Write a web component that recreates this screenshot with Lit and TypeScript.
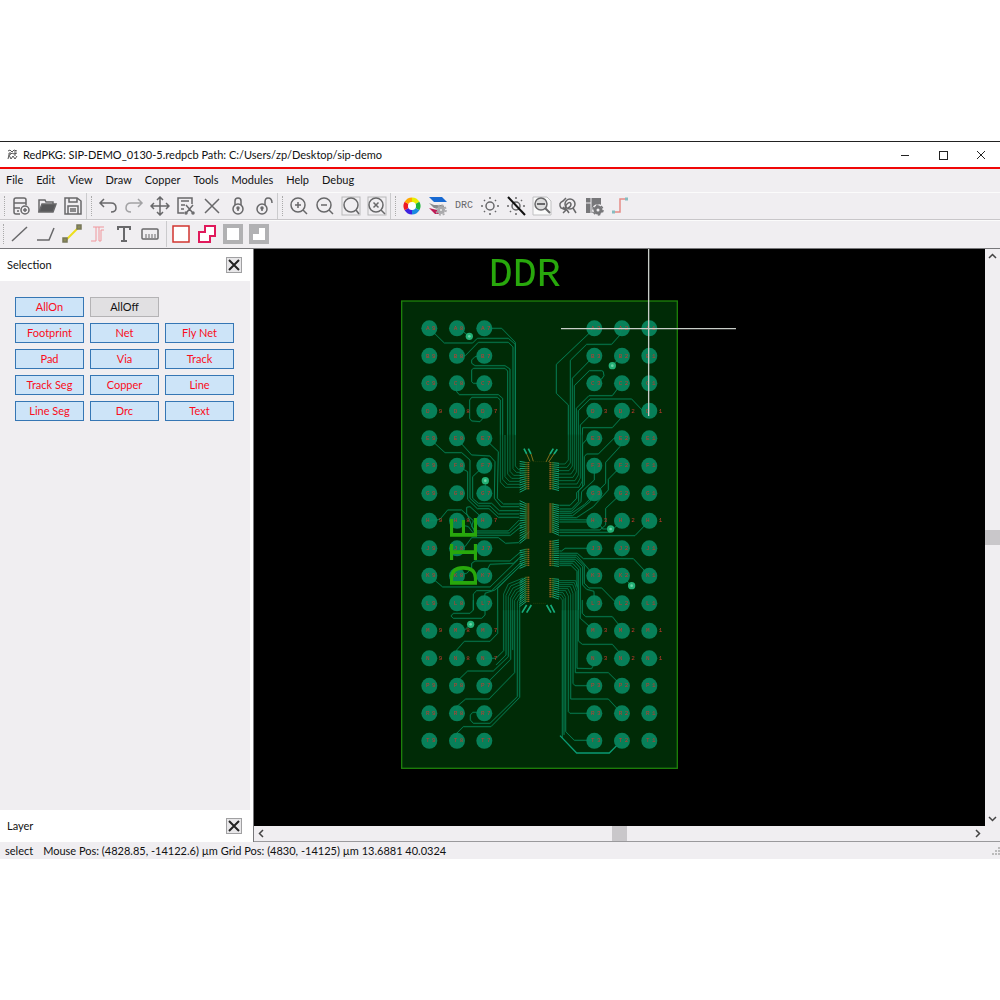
import { LitElement, html, css, svg } from "lit";
import { customElement, state } from "lit/decorators.js";

const g = "#68686a";

const icons: Record<string, unknown> = {
  new: svg`<path d="M15 9V4Q15 2 13 2H5Q3 2 3 4V16Q3 18 5 18H9M3 7H15M3 12H9M6 15H8" /><circle cx="14" cy="14" r="4" /><path d="M12 14H16M14 12V16" />`,
  open: svg`<path d="M2 16V4H8L9 6H16V8" fill="none" /><path d="M2 16L5 8H19L16 16Z" fill="#58585a" />`,
  save: svg`<path d="M3 2H14L18 5V18H2V2Z" /><path d="M6 2V6H14V2M5 18V10H15V18M7 13H13M7 15H13" />`,
  undo: svg`<path d="M6 3L2 7L6 11M2 7H13Q18 7 18 12Q18 16 13 16" />`,
  redo: svg`<path d="M14 3L18 7L14 11M18 7H7Q2 7 2 12Q2 16 7 16" stroke="#a2a2a4" />`,
  move: svg`<path d="M10 2V18M2 10H18M7 4L10 1L13 4M7 16L10 19L13 16M4 7L1 10L4 13M16 7L19 10L16 13" />`,
  cut: svg`<path d="M16 8V2H2V17H8M5 5H13M5 9H9M5 13H8M10 9L16 16M17 9L11 16" /><circle cx="10" cy="17" r="1" /><circle cx="17" cy="17" r="1" />`,
  del: svg`<path d="M3 3L17 17M17 3L3 17" />`,
  lock: svg`<circle cx="10" cy="13" r="5" /><path d="M7 9V5Q7 2 10 2Q13 2 13 5V9M10 12V15" /><circle cx="10" cy="12" r="1" />`,
  unlock: svg`<circle cx="8" cy="13" r="5" /><path d="M11 9V6Q11 2 14 2Q18 2 18 7M8 12V15" /><circle cx="8" cy="12" r="1" />`,
  zin: svg`<circle cx="9" cy="9" r="7" /><path d="M14 14L18 18M6 9H12M9 6V12" />`,
  zout: svg`<circle cx="9" cy="9" r="7" /><path d="M14 14L18 18M6 9H12" />`,
  zfit: svg`<rect x="1" y="1" width="18" height="18" stroke="#b8b8ba" stroke-width="1" /><circle cx="10" cy="9" r="7" /><path d="M15 14L18 18" />`,
  zsel: svg`<rect x="1" y="1" width="18" height="18" stroke="#b8b8ba" stroke-width="1" /><circle cx="9" cy="9" r="7" /><path d="M14 14L18 18M6.500 6.500L11.500 11.500M11.500 6.500L6.500 11.500" />`,
  colour: svg`<g stroke-width="5"><path d="M10 4A6 6 0 0 1 15.200 7" stroke="#e8ee00" /><path d="M15.200 7A6 6 0 0 1 15.200 13" stroke="#1db43a" /><path d="M15.200 13A6 6 0 0 1 10 16" stroke="#1989e0" /><path d="M10 16A6 6 0 0 1 4.800 13" stroke="#3e22df" /><path d="M4.800 13A6 6 0 0 1 4.800 7" stroke="#ee1824" /><path d="M4.800 7A6 6 0 0 1 10 4" stroke="#ffa800" /></g><circle cx="10" cy="10" r="4" fill="#fff" stroke="none" />`,
  layers: svg`<g stroke="none"><path d="M1 1H14L19 6H6Z" fill="#1769d2" /><path d="M1 7L6 9L15 9L17 12H6Z" fill="#87898c" /><path d="M1 12L9 14L11 18H7Z" fill="#bf1955" /><circle cx="13" cy="14" r="4" fill="#aaaaac" /></g><circle cx="13" cy="14" r="5" stroke="#aaaaac" stroke-dasharray="2 1.900" /><circle cx="13" cy="14" r="1" fill="#eee" stroke="none" />`,
  sun: svg`<circle cx="10" cy="10" r="4" /><path d="M10 1V3M10 17V19M1 10H3M17 10H19M4 4L5 5M15 15L16 16M16 4L15 5M4 16L5 15" />`,
  sunoff: svg`<circle cx="10" cy="10" r="4" /><path d="M10 1V3M10 17V19M1 10H3M17 10H19M4 16L5 15M16 4L15 5" /><path d="M2 1L19 19" stroke="#111" stroke-width="2" />`,
  page: svg`<path d="M1 1H15L19 5V19H1Z" fill="#fafafa" stroke="#c0c0c2" stroke-width="1" /><circle cx="9" cy="8" r="6" fill="#ddd" /><path d="M13 12L18 17M5 8H13" stroke-width="2" />`,
  find: svg`<circle cx="12" cy="8" r="5" /><path d="M15 12L18 17M8 2L5 5Q0 7 3 12L8 14M5 11L8 14L5 17M11 17L9 14Q6 11 9 8Q12 5 13 8Q13 11 10 12" />`,
  module: svg`<g stroke="none" fill="#77777a"><path d="M2 2H17V9H7V17H2Z" /><path d="M7 9H11V17H7Z" /></g><path d="M7 2V17M2 7H7" stroke="#f0eef1" stroke-width="1" /><circle cx="14" cy="14" r="6" fill="#f0eef1" stroke="none" /><circle cx="14" cy="14" r="3" stroke="#77777a" stroke-width="3" /><circle cx="14" cy="14" r="5" stroke="#77777a" stroke-width="1.500" stroke-dasharray="2.600 2.636" />`,
  route: svg`<path d="M3 16H10V3H16" stroke="#e58c86" /><path d="M2 16H5M15 3H18" stroke="#86bcc0" stroke-width="3" />`,
  line: svg`<path d="M2 17L17 3" />`,
  poly: svg`<path d="M1 16H13L18 4" />`,
  track: svg`<path d="M4 16L16 4" stroke="#ecde1c" stroke-width="2" /><g fill="#8b8b55" stroke="#77775a"><rect x="1" y="14" width="4" height="4" /><rect x="15" y="1" width="4" height="4" /></g>`,
  pair: svg`<path d="M3 17H8V3H16M11 17H13V6H16M5 3H8M11 3V17" stroke="#f0969c" stroke-width="1" />`,
  text: svg`<path d="M4 6V3H16V6M10 3V17M7 17H13" stroke-width="2" />`,
  ruler: svg`<rect x="2" y="5" width="16" height="10" rx="1" /><path d="M6 10V14M9 10V14M12 10V14M15 10V14" stroke-width="1" />`,
  rect: svg`<rect x="2" y="2" width="16" height="16" fill="#fff" stroke="#d1352f" />`,
  shape: svg`<path d="M8 2H18V12H13V18H2V8H8Z" fill="#fff" stroke="#e0195b" stroke-width="2" />`,
  fill: svg`<rect x="2" y="2" width="16" height="16" fill="#fff" stroke="#b1b1b3" stroke-width="4" />`,
  fillcut: svg`<rect x="0" y="0" width="20" height="20" fill="#b1b1b3" stroke="none" /><path d="M10 4H16V16H4V10H10Z" fill="#fff" stroke="none" />`,
};

const row1: [string, string][][] = [
  [["new", "New"], ["open", "Open"], ["save", "Save"]],
  [["undo", "Undo"], ["redo", "Redo"], ["move", "Move"], ["cut", "Cut"], ["del", "Delete"], ["lock", "Lock"], ["unlock", "Unlock"]],
  [["zin", "Zoom in"], ["zout", "Zoom out"], ["zfit", "Zoom fit"], ["zsel", "Clear zoom"]],
  [["colour", "Colours"], ["layers", "Layers"], ["drc", "DRC"], ["sun", "Highlight"], ["sunoff", "Highlight off"], ["page", "Inspect"], ["find", "Find"], ["module", "Module settings"], ["route", "Route"]],
];
const row2: [string, string][][] = [
  [["line", "Line"], ["poly", "Polyline"], ["track", "Track"], ["pair", "Pair"], ["text", "Text"], ["ruler", "Ruler"]],
  [["rect", "Rectangle"], ["shape", "Polygon"], ["fill", "Cutout"], ["fillcut", "Polygon cutout"]],
];
const menus = ["File", "Edit", "View", "Draw", "Copper", "Tools", "Modules", "Help", "Debug"];
const filters = ["AllOn", "AllOff", "", "Footprint", "Net", "Fly Net", "Pad", "Via", "Track", "Track Seg", "Copper", "Line", "Line Seg", "Drc", "Text"];

// Ball grid: row letters, and the six column digits with their centres.
const rows = "ABCDEFGHJKLMNPRT".split("");
const cols: [string, number][] = [["9", 118], ["8", 201], ["7", 283], ["3", 613], ["2", 696], ["1", 778]];
const wideRows = "DHMN";

// Board units: three per screen pixel. Each list has its own vertical origin.
const upper = [
  "118,220 163,264 248,264 262,250 355,250 376,268 376,540",
  "200,215 238,244",
  "283,220 335,220 376,262 376,540",
  "200,302 226,302 265,262 355,262 369,276 369,540",
  "283,302 255,305 245,315 245,325 255,332 345,332 360,342 360,540",
  "283,385 250,385 245,380 245,345 250,340 345,340 353,348 353,540",
  "200,385 200,410 208,419 325,419 338,430 338,540",
  "283,468 283,485 270,500 245,498 239,490 239,435 245,427 322,427 331,435 331,540",
  "613,220 499,328 499,415 535,450 535,540",
  "695,220 690,240 665,268 590,268 541,316 541,540",
  "613,302 547,370 547,540",
  "695,302 667,332",
  "613,385 635,372 642,362 640,350 635,347 598,347 553,392 553,540",
  "695,385 667,422 597,422 559,460 559,540",
  "778,466 757,466 725,432 600,432 565,467 565,540",
  "613,468 571,510 571,540",
  "695,468 695,487 667,518 578,518 577,540",
];
const middle = [
  "118,25 165,68 215,68 240,90 240,205 265,228 300,228 325,252 388,252",
  "200,25 245,75 300,78 315,95 313,205 333,230 388,230",
  "283,25 325,65 322,205 340,222 395,222",
  "200,107 233,125 233,208 262,236 297,236 325,262 388,262",
  "283,107 248,140 248,205 265,220 305,220 328,242 388,242",
  "286,152 286,190",
  "118,272 150,268 173,240 215,240 250,272 245,290 258,303 355,303 388,270",
  "200,272 215,285 235,290 250,309 358,309 390,280",
  "230,250 230,232 240,230 275,262 283,272",
  "230,250 258,316 361,316 395,289",
  "200,355 225,350 245,323 325,323 347,340 385,338 418,305",
  "200,437 230,430 245,415 245,400 255,393 360,393 395,363",
  "283,437 300,403 370,400 398,375",
  "118,437 158,471 300,471 385,388",
  "250,540 250,492 260,482 305,482 392,398",
  "283,520 285,490 315,480 395,404",
  "323,540 323,475 398,400",
  "118,272 142,272",
  "613,25 590,28 578,42 578,170 560,188 560,205 540,226 508,226",
  "695,25 675,22 625,72 590,72 583,80 583,165 566,182 566,215 545,237 508,237",
  "695,25 690,50 647,97 647,160 583,224 545,250 508,250",
  "613,107 613,150 575,185 573,215 545,244 508,244",
  "695,107 655,148 655,180 610,230 560,263 508,263",
  "613,190 600,215 548,257 508,257",
  "695,190 647,235 647,285 630,300 508,300",
  "613,276 508,276",
  "662,297 638,297 620,270 508,269",
  "695,272 660,307 508,307",
  "778,272 735,317 508,317",
  "613,355 525,355 515,363 508,363",
  "778,437 730,386 580,386 562,370 508,370",
  "613,437 560,376 508,376",
  "695,437 725,467",
  "508,382 558,382 583,408 583,460 597,474 635,474 680,520 695,520",
  "508,388 556,388 578,410 578,465 590,478 612,484 613,520",
  "508,394 553,394 571,414 571,540",
  "508,400 548,400 565,418 565,540",
  "508,406 543,406 561,424 561,470",
];
const lower = [
  "250,30 240,40 190,40 183,48 190,55 275,55 285,45 285,0",
  "250,0 250,30",
  "242,72 222,92 200,92",
  "200,175 200,150 223,124 300,124 323,100 323,30",
  "283,175 318,175 341,152 341,30",
  "348,30 348,165 318,195",
  "200,257 205,240 233,213 310,213 355,170 355,30",
  "283,257 362,178 362,30",
  "368,30 368,150",
  "200,340 200,320 227,297 297,297 374,218 374,30",
  "283,337 248,337 241,345 241,360 250,370 300,370 382,290 382,30",
  "200,422 200,400 220,380 303,380 389,292 389,30",
  "517,30 517,413",
  "522,30 522,405",
  "527,30 527,395 553,421 613,421",
  "535,30 535,335 540,340 613,340",
  "542,30 542,297 655,297 695,340",
  "549,30 549,250 555,257 613,257",
  "556,30 556,218 655,218 695,257",
  "561,30 561,205 605,206 613,190",
  "565,30 565,123 577,133 667,133 695,165",
  "571,30 571,55 613,92",
  "577,0 577,40 587,50 667,50 695,85",
];

const span = (n: number) => Array.from({ length: n }, (_, i) => i);

// Escapes from the die that join the long vertical runs above and below it.
const fans = [
  ...[331, 338, 345, 353, 360, 369, 376].map((x, i) => `${x},15 ${x},${156 - i * 8} ${x + 15 - i},${172 - i * 9} 392,${172 - i * 9}`),
  ...[535, 541, 547, 553, 559, 565, 571, 577].map((x, i) => `${x},15 ${x},${90 + i * 9} ${x - 10},${102 + i * 10} 504,${102 + i * 10}`),
  ...[389, 382, 374, 368, 362, 355, 348, 341].map((x, i) => `${x},540 ${x},${520 - i * 4} ${Math.min(x + 14, 392)},${504 - i * 6} 400,${500 - i * 8}`),
  ...[517, 522, 527, 535, 542, 549, 556, 561, 565].map((x, i) => `${x},540 ${x},${510 - i * 4} ${x - 8},${500 - i * 6} 504,${500 - i * 6}`),
];

// Bond pins: side, first y, count, fall of the outer end from first pin to last.
const pins: [number, number, number, number, number][] = [
  [-1, 98, 14, -4, 12], [-1, 222, 18, -10, 18], [-1, 358, 9, 4, 10], [-1, 442, 13, 12, 16],
  [1, 98, 14, 2, 6], [1, 222, 15, 4, 10], [1, 334, 13, -4, 4], [1, 446, 10, 2, 8],
];
const vias = [[238, -281], [667, -193], [286, 152], [662, 297], [725, 467], [242, 583]];

@customElement("app-root")
export class AppRoot extends LitElement {
  @state() private off = new Set<string>(["AllOff"]);

  static styles = css`
    :host { display: flex; flex-direction: column; box-sizing: border-box; min-height: 100vh; padding: 141px 0; background: #fff; color: #111; font: 11px/16px Lato, "Open Sans", sans-serif; }
    * { box-sizing: border-box; }
    button { font: inherit; color: inherit; padding: 0; margin: 0; border: 0; background: none; }
    svg { display: block; }
    .window { flex: 1; display: flex; flex-direction: column; background: #f0eef1; border-top: 1px solid #222; }
    .title { display: flex; align-items: center; height: 25px; background: #fff; padding-left: 7px; gap: 5px; }
    .title h1 { flex: 1; font: inherit; margin: 0; }
    .winbtn { width: 38px; height: 25px; display: grid; place-items: center; }
    .menu { display: flex; gap: 13px; align-items: center; height: 25px; padding: 0 6px 2px; border-top: 2px solid #f00707; }
    .bar { display: flex; align-items: center; height: 28px; padding-left: 1px; border-top: 1px solid #fbfbfb; border-bottom: 1px solid #c8c6c9; }
    .bar.second { height: 29px; padding: 0 0 2px; border-bottom-color: #77777a; }
    .group { display: flex; align-items: center; }
    .grip { width: 3px; height: 20px; margin: 0 1px 0 3px; border-left: 1px dotted #aaa; }
    .group + .group { border-left: 1px solid #cbcbcd; padding-left: 1px; }
    .group.plain { margin-left: 3px; }
    .tool { width: 26px; height: 26px; display: grid; place-items: center; font: 10px/16px "Liberation Mono", monospace; color: #68686a; }
    .body { flex: 1; display: flex; min-height: 0; }
    .side { flex: 0 0 254px; display: flex; flex-direction: column; padding-right: 3px; border-right: 1px solid #77777a; background: #fff; }
    .head { display: flex; align-items: center; justify-content: space-between; height: 32px; padding: 0 8px 0 7px; background: #fff; }
    .head h2 { font: inherit; margin: 0; }
    .close { width: 16px; height: 16px; border: 1px solid #a0a0a2; background: #e8e7e9; display: grid; place-items: center; }
    .content { flex: 1; background: #f0eef1; padding: 16px 16px 0 15px; }
    .filters { display: grid; grid-template-columns: repeat(3, 1fr); grid-auto-rows: 20px; gap: 6px; }
    .filter { border: 1px solid #3576b4; background: #cde4f8; color: #fa0d20; line-height: 16px; }
    .filter.off { border-color: #b4b3b5; background: #e1e0e2; color: #111; }
    .view { flex: 1; min-width: 0; display: grid; grid-template-columns: 1fr 15px; grid-template-rows: 1fr 15px; border-bottom: 1px solid #9a999c; }
    .canvas { background: #000; min-height: 0; overflow: hidden; }
    .canvas svg { width: 100%; height: 100%; }
    .scroll { display: flex; background: #f0eef1; }
    .scroll.v { flex-direction: column; }
    .arrow { flex: 0 0 15px; height: 15px; display: grid; place-items: center; }
    .thumb { flex: 0 0 15px; background: #c9c7ca; }
    .trail { flex: 1; }
    .status { display: flex; align-items: center; justify-content: space-between; height: 17px; padding-left: 5px; background: #f0eef1; }
    .status p { margin: 0; display: flex; gap: 10px; }
    .pin { font: 18px "Liberation Mono", monospace; fill: #c23b30; }
    .name { font: 120px "Liberation Mono", monospace; fill: #28a80c; }
  `;

  private toggle(name: string) {
    const next = new Set(this.off);
    next.has(name) ? next.delete(name) : next.add(name);
    this.off = next;
  }

  private icon(id: string) {
    return html`<svg width="20" height="20" viewBox="0 0 20 20" fill="none" stroke=${g} stroke-width="1.500" aria-hidden="true">${icons[id]}</svg>`;
  }

  private bar(groups: [string, string][][], second: boolean) {
    return html`<div class="bar ${second ? "second" : ""}" role="toolbar">
      ${groups.map((items, i) => html`<div class="group ${second && i ? "plain" : ""}">
        ${second && i ? "" : html`<span class="grip"></span>`}
        ${items.map(([id, label]) => html`<button class="tool" aria-label=${label}>${id === "drc" ? "DRC" : this.icon(id)}</button>`)}
      </div>`)}
    </div>`;
  }

  private arrow(label: string, d: string) {
    return html`<button class="arrow" aria-label=${label}><svg width="9" height="9" viewBox="0 0 9 9" fill="none" stroke="#444" stroke-width="1.500"><path d=${d} /></svg></button>`;
  }

  private head(name: string) {
    return html`<div class="head"><h2>${name}</h2><button class="close" aria-label="Close ${name}"><svg width="12" height="12" viewBox="0 0 12 12" stroke="#222" stroke-width="2"><path d="M1 1L11 11M11 1L1 11" /></svg></button></div>`;
  }

  private traces(list: string[], y: number) {
    return svg`<g transform="translate(0 ${y})">${list.map((p) => svg`<polyline points=${p} />`)}</g>`;
  }

  private bonds([side, y, n, from, to]: [number, number, number, number, number]) {
    const x = 448 + side * 30;
    return span(n).map((i) => {
      const py = y + i * 6;
      const fall = from + ((to - from) * i) / n;
      return svg`<path d="M${x + side * 8} ${py}L${x + side * 29} ${py + fall}" stroke="#12a074" stroke-width="3" /><path d="M${x} ${py}H${x + side * 6}" stroke="#8c5c1c" stroke-width="4" /><path d="M${x + side * 6} ${py}H${x + side * 14}" stroke="#3f6a1c" stroke-width="3" />`;
    });
  }

  private board() {
    return svg`<g transform="translate(390 430) scale(.3333)">
      <rect x="35" y="-387" width="827" height="1402" fill="#002b06" stroke="#1c800b" stroke-width="4" />
      <g fill="none" stroke="#067a50" stroke-width="2.500">
        ${this.traces(upper, -525)}${this.traces(middle, 0)}${this.traces(lower, 510)}${this.traces(fans, 0)}
        <path d="M510 917L560 969H658L695 932" stroke="#0a9b74" stroke-width="4" />
      </g>
      ${rows.map((r, i) => cols.map(([c, x]) => svg`<circle cx=${x} cy=${i * 82.5 - 305} r="24" fill="#078059" />`))}
      <g fill="none" stroke="#0b9568" stroke-width="2" opacity=".5">${this.traces(upper, -525)}${this.traces(middle, 0)}${this.traces(lower, 510)}</g>
      ${rows.map((r, i) => cols.map(([c, x]) => {
        const wide = wideRows.includes(r);
        return svg`<text class="pin" x=${x - 10} y=${i * 82.5 - 300}>${r}</text><text class="pin" x=${x + (wide ? 28 : 8)} y=${i * 82.5 - 300}>${c}</text>`;
      }))}
      ${vias.map(([x, y]) => svg`<circle cx=${x} cy=${y} r="11" fill="#23b176" /><circle cx=${x} cy=${y} r="4" fill="#6bd2a5" />`)}
      ${pins.map((p) => this.bonds(p))}
      <g fill="none" stroke-width="3">
        <path d="M402 56L410 72M415 56L423 72M490 56L480 72M502 58L492 72M410 525L396 548M424 525L410 548M470 525L483 548M482 525L494 548" stroke="#16ad7c" stroke-width="5" />
        <path d="M410 72L420 94M423 72L430 94M480 72L468 96M492 72L476 96" stroke="#86701c" />
        <path d="M430 95H468M430 520H468" stroke="#243d0b" stroke-dasharray="3 3" />
      </g>
      <text class="name" transform="translate(260 474) rotate(-90)" x="0" y="0">DIE</text>
      <text class="name" x="296" y="-431">DDR</text>
      <path d="M513 -304H1038M776 -545V-42" stroke="#c8cdc8" stroke-width="4" fill="none" />
    </g>`;
  }

  render() {
    return html`<main class="window">
      <header class="title">
        <svg width="11" height="11" viewBox="0 0 11 11" fill="none" stroke="#555"><path d="M1 2L3 1L5 3L7 1L10 2M1 5H4L5 4L7 5L10 4M1 10L2 6L4 10L6 7L8 10L10 7M3 3V6M8 2V7" /></svg>
        <h1>RedPKG: SIP-DEMO_0130-5.redpcb Path: C:/Users/zp/Desktop/sip-demo</h1>
        <div class="group">
          <button class="winbtn" aria-label="Minimize"><svg width="10" height="10" stroke="#222"><path d="M1 5.500H9" /></svg></button>
          <button class="winbtn" aria-label="Maximize"><svg width="10" height="10" stroke="#222" fill="none"><rect x="1.500" y="1.500" width="8" height="8" /></svg></button>
          <button class="winbtn" aria-label="Close"><svg width="10" height="10" stroke="#222"><path d="M1 1L9 9M9 1L1 9" /></svg></button>
        </div>
      </header>
      <nav class="menu">${menus.map((m) => html`<button>${m}</button>`)}</nav>
      ${this.bar(row1, false)}${this.bar(row2, true)}
      <div class="body">
        <aside class="side">
          ${this.head("Selection")}
          <div class="content"><div class="filters">
            ${filters.map((f) => f ? html`<button class="filter ${this.off.has(f) ? "off" : ""}" @click=${() => this.toggle(f)}>${f}</button>` : html`<span></span>`)}
          </div></div>
          ${this.head("Layer")}
        </aside>
        <section class="view">
          <div class="canvas"><svg viewBox="254 249 731 577" role="img" aria-label="Board">${this.board()}</svg></div>
          <div class="scroll v">${this.arrow("Scroll up", "M1 6L4.500 2.500L8 6")}<span class="trail"></span><span class="thumb"></span><span class="trail"></span>${this.arrow("Scroll down", "M1 3L4.500 6.500L8 3")}</div>
          <div class="scroll">${this.arrow("Scroll left", "M6 1L2.500 4.500L6 8")}<span class="trail"></span><span class="thumb"></span><span class="trail"></span>${this.arrow("Scroll right", "M3 1L6.500 4.500L3 8")}</div>
        </section>
      </div>
      <footer class="status">
        <p><span>select</span><span>Mouse Pos: (4828.85, -14122.6) µm Grid Pos: (4830, -14125) µm 13.6881 40.0324</span></p>
        <svg width="8" height="8" fill="#bbb"><path d="M6 0H8V2H6ZM3 3H5V5H3ZM6 3H8V5H6ZM0 6H2V8H0ZM3 6H5V8H3ZM6 6H8V8H6Z" /></svg>
      </footer>
    </main>`;
  }
}
